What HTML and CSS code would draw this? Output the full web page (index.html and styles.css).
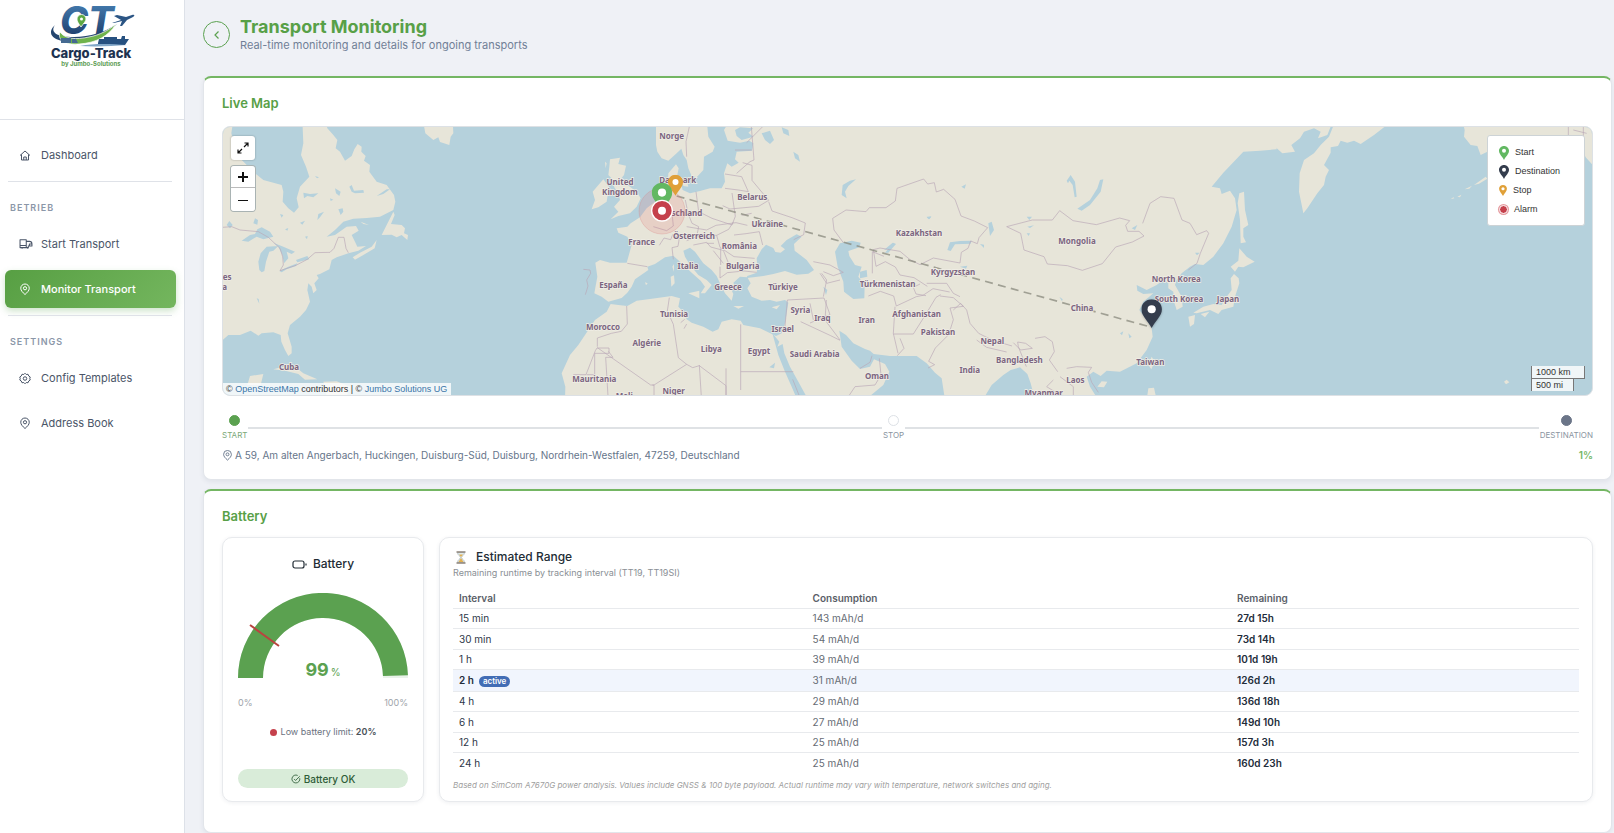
FILE: index.html
```html
<!DOCTYPE html>
<html lang="en">
<head>
<meta charset="utf-8">
<title>Transport Monitoring</title>
<link rel="stylesheet" href="styles.css">
</head>
<body>
<svg class="defs" aria-hidden="true">
  <symbol id="i-pin" viewBox="0 0 24 24"><path d="M12 22c5-4.500 8.500-8 8.500-12.500a8.500 8.500 0 0 0-17 0C3.500 14 7 17.500 12 22z"/><circle cx="12" cy="9.500" r="3.200"/></symbol>
  <symbol id="m-pin" viewBox="0 0 60 84"><path d="M30 0C13 0 0 13 0 29c0 20 18 32 30 55 12-23 30-35 30-55C60 13 47 0 30 0z"/><circle cx="30" cy="29" r="12" fill="#fff"/></symbol>
</svg>
<div class="app">
  <aside class="sidebar">
    <div class="logo">
      <svg viewBox="0 0 110 80" role="img" aria-label="Cargo-Track by Jumbo-Solutions">
        <defs>
          <linearGradient id="lg" x1="0" y1="0" x2="0" y2="1"><stop offset="0" stop-color="#4b87bb"/><stop offset="1" stop-color="#173360"/></linearGradient>
        </defs>
        <text x="20" y="34" class="logo-ct" fill="url(#lg)">C</text>
        <text x="48" y="34" class="logo-ct" fill="url(#lg)">T</text>
        <path d="M41 27c-3-4-4-6-4-8a4 4 0 0 1 9 0c0 2-2 4-5 8z" fill="#5da843" stroke="#fff" stroke-width=".8"/><circle cx="41.500" cy="19" r="1.500" fill="#fff"/>
        <path d="M15 25c-9 8-3 18 20 16 19-2 33-9 42-17-12 8-27 13-43 13-18 0-24-5-19-12z" fill="#25466f"/>
        <path d="M20 32c5 7 16 8 29 5 11-2 20-7 27-13-7 12-20 19-37 20-14 1-22-4-19-12z" fill="#6fb34c" stroke="#fff" stroke-width=".7"/>
        <path d="M72 23l9-3-7-4 3-1 9 2 6-2c3-1 3 1 1 2l-6 3-5 6-2 0 2-5-8 2z" fill="#2b5584"/>
        <path d="M58 43l1-4h5v-2h13v2h4l1-3h3v3h4l-4 6H58z" fill="#275180"/>
        <path d="M21 38h10v5H21zM32 39h4l2 4h-6z" fill="#456a91"/>
        <path d="M40 46c14-3 32-2 47-1-15 1-30 2-47 1z" fill="#82a7c8"/>
        <text x="51" y="58" text-anchor="middle" class="logo-name">Cargo-Track</text>
        <text x="51" y="66" text-anchor="middle" class="logo-by">by Jumbo-Solutions</text>
      </svg>
    </div>
    <nav class="nav">
      <a href="#" class="nav-item"><svg class="ico" viewBox="0 0 24 24"><path d="M2 12 12 3l10 9M5 10v11h14V10M9.500 21v-6h5v6"/></svg>Dashboard</a>
      <hr>
      <h2>BETRIEB</h2>
      <a href="#" class="nav-item"><svg class="ico wide" viewBox="0 0 27 24"><path d="M2 3h12v15H2zM14 6h6c3 0 5 2 5 5v4h-5v-4h5M14 18h4v-4M6 18v2M17 18v2M2 14h12"/></svg>Start Transport</a>
      <a href="#" class="nav-item active" aria-current="page"><svg class="ico"><use href="#i-pin"/></svg>Monitor Transport</a>
      <hr>
      <h2>SETTINGS</h2>
      <a href="#" class="nav-item"><svg class="ico" viewBox="0 0 24 24"><path d="M12 1.500l2.500 2.500 3.500-.500 1.500 3.500 3 2-1 3 1 3-3 2-1.500 3.500-3.500-.500-2.500 2.500-2.500-2.500-3.500.500L4.500 17l-3-2 1-3-1-3 3-2L6 3.500l3.500.500z"/><circle cx="12" cy="12" r="3.500"/></svg>Config Templates</a>
      <a href="#" class="nav-item"><svg class="ico"><use href="#i-pin"/></svg>Address Book</a>
    </nav>
  </aside>

  <main class="main">
    <header class="head">
      <button class="back" aria-label="Back"><svg viewBox="0 0 12 12"><path d="M7.500 2.500 4 6l3.500 3.500"/></svg></button>
      <div>
        <h1>Transport Monitoring</h1>
        <p>Real-time monitoring and details for ongoing transports</p>
      </div>
    </header>

    <section class="card">
      <h2>Live Map</h2>
      <div class="map">
        <svg class="map-canvas" viewBox="6 21 4113 804" preserveAspectRatio="xMidYMid slice" role="img" aria-label="World map">
          <g class="land">
            <path d="M0 0H40L34 40 45 80 60 115 105 160 130 180 185 195 190 215 188 245 205 265 222 278 236 262 230 235 240 200 268 170 258 140 243 105 250 70 247 0H315L322 25 340 45 352 60 347 85 360 95 375 122 395 108 403 88 413 72 425 80 424 95 437 108 432 122 450 135 448 155 470 185 500 195 522 225 526 245 520 270 480 290 440 294 400 296 370 305 345 330 320 350 345 345 380 320 408 318 416 332 395 345 405 365 412 380 438 378 415 392 385 400 350 412 335 420 328 448 300 462 290 465 296 475 283 490 290 510 280 520 275 500 265 490 262 510 270 545 258 570 240 590 210 615 203 640 215 680 215 700 205 708 195 690 184 665 182 645 160 637 125 640 115 647 92 632 60 645 25 645 8 660H0z"/>
            <path d="M398 412 420 398 455 380 470 360 464 385 430 405 405 419zM485 345 500 315 520 275 524 285 513 312 545 315 555 325 552 340 564 345 562 360 545 345 530 352 515 344z"/>
            <path d="M612 18 616 40 640 60 655 52 660 66 688 75 692 50 700 40 698 0H612zM160 748 190 740 235 748 250 760 292 778 255 779 235 762 195 752zM310 785 350 784 390 800 380 828H320zM82 795 90 768 130 762 122 795zM422 305 447 315 430 312z"/>
          </g>
          <g class="land" transform="translate(960 0)">
            <path d="M348 0V75L352 95 365 115 385 122 410 100 424 86 430 105 440 120 445 145 455 168 470 172 490 150 492 110 518 95 524 80 505 50 500 0z"/>
            <path d="M570 0 552 30 563 62 600 68 628 62 640 70 636 92 590 95 585 118 596 128 575 140 562 130 552 160 555 185 545 205 510 205 480 213 450 220 428 210 424 195 430 185 412 165 416 145 408 133 385 160 383 200 380 235 345 245 320 265 300 292 272 310 262 320 230 325 235 338 262 350 275 375 268 400 260 428 210 428 180 420 166 428 172 470 163 520 185 530 205 545 245 534 262 518 275 500 285 478 325 450 322 440 345 432 375 412 400 407 420 425 455 458 482 482 495 500 482 520 495 520 515 495 500 480 475 465 450 435 435 410 430 392 450 383 465 395 490 430 515 450 530 468 540 490 555 520 575 542 580 522 570 500 590 510 580 488 600 470 622 472 632 490 622 505 635 530 665 542 690 540 710 545 735 540 745 548 740 580 735 610 725 640 708 648 660 625 610 615 602 602 575 598 545 605 535 628 518 635 490 620 455 608 440 598 430 575 415 560 420 535 395 528 330 537 290 542 262 558 235 555 212 552 200 575 165 600 135 645 115 675 90 705 65 760 76 800 75 840H1010V0z"/>
            <path d="M210 118 240 113 235 132 258 137 252 165 240 180 270 200 290 215 302 235 290 260 270 280 235 288 212 298 235 275 222 260 240 240 235 220 222 200 225 185 205 165 208 140zM158 215 190 178 207 200 200 245 175 262 155 268 165 240zM195 125l5 5-3 15zM445 520 478 512 478 535zM392 470 402 466 404 490 394 500zM397 440 402 432 402 455zM425 178 440 180 445 200 430 198zM580 558H612L595 566zM695 562 720 555 710 568zM315 487l8 3-5 6z"/>
          </g>
          <g class="land" transform="translate(1920 0)">
            <path d="M30 0H1250V88L1200 92 1150 95 1090 158 1055 200 1080 205 1085 222 1110 212 1125 235 1130 270 1115 320 1090 370 1060 410 1030 435 1005 432 990 440 965 460 950 480 945 495 965 530 968 560 950 570 942 545 940 515 925 505 925 490 910 480 890 495 860 510 830 495 832 512 850 522 880 520 850 545 838 570 860 600 875 625 878 650 860 690 830 730 780 755 740 752 722 768 700 755 680 770 690 800 715 840H30z"/>
            <path d="M712 800 725 784 742 785 732 802zM865 735 875 710 884 725 874 748zM860 840 865 805 882 803 890 840zM985 590 1005 585 1002 612 990 620zM1000 578 1030 560 1060 552 1085 555 1100 530 1115 510 1112 475 1122 462 1136 475 1138 490 1125 530 1120 560 1085 570 1075 582 1050 570 1010 580zM1022 582 1048 575 1035 592zM1112 440 1135 422 1138 385 1160 410 1184 425 1150 442 1135 440 1125 455zM1138 220 1152 215 1155 270 1165 315 1150 325 1150 350 1158 367 1142 370 1140 300 1133 250z"/>
            <g transform="translate(1062 -150)">
              <path d="M60 265 78 243 130 240 185 232 205 250 243 245 232 225 258 205 270 185 300 175 320 185 312 205 340 195 358 150H0V300zM540 150 510 172 480 195 440 222 420 212 400 218 380 212 372 228 350 232 350 248 330 285 345 300 335 320 330 345 310 370 280 415 268 430 262 400 255 365 257 310 270 270 300 250 320 225 345 200 358 168 370 150zM745 150 752 180 750 200 770 225 790 228 800 255 820 245 870 240 1100 230 1115 262 1136 285 1140 150zM710 388l8-6 3 3zM730 380l12-6-4 8zM752 358l22-11-8 9zM780 345l35-25 5 6-25 15zM870 935l8-6 8 8-10 6z"/>
            </g>
          </g>
          <g class="water">
            <path d="M65 362 90 345 105 342 112 328 125 322 150 335 160 350 130 358 110 350 85 365zM118 450 115 425 122 400 140 380 175 378 160 392 148 395 138 425 133 453 125 457zM160 368 190 380 225 395 215 402 200 395 205 415 192 430 187 405 175 380zM178 453 205 440 232 430 228 438 200 448 185 457zM228 420 262 408 268 418 232 427zM250 218 270 222 295 220 280 232 262 228 252 235zM345 205 362 215 358 228 348 220zM388 200 395 195 402 212 430 210 432 218 405 220 395 215zM292 300 295 282 312 275 300 292zM355 268 368 265 370 275 362 285zM100 310 105 295 114 300 112 314zM470 228 500 208 510 208 490 222zM110 535l6 2 2 14zM20 315l8-12 10 12-8 10zM240 308l15-6-8 12zM180 282l10 3-5 8zM330 235l10 4-8 4zM255 350l8-2-2 10zM195 328l10-4-3 8zM285 168l12 4-6 3z"/>
            <g transform="translate(960 0)">
              <path d="M652 442 650 415 665 388 678 374 700 384 706 396 722 398 735 388 722 378 740 360 770 343 785 350 762 372 764 392 800 420 822 450 805 461 770 464 735 453 700 462 670 468 640 472 620 474 622 468 650 458zM885 395 900 370 935 362 962 368 958 382 925 393 928 408 945 435 965 440 955 470 974 495 973 535 940 537 912 515 910 485 893 440zM697 640 718 665 712 680 728 672 733 700 750 740 775 785 805 840H772L755 800 735 755 715 705zM898 632 918 645 940 670 975 687 990 692 1001 702 1050 708 1130 708 1160 730 1185 758 1205 775 1215 840H975L1000 820 1030 795 1048 755 1035 732 1002 718 990 740 960 747 935 722 905 680z"/>
              <path d="M585 30 600 22 640 25 625 38 640 50 605 60 590 48zM665 40 690 32 702 60 690 72 675 60zM725 22 745 30 748 48 730 40zM760 95 775 105 780 125 765 115zM908 195 930 182 948 178 925 198 915 215 920 235 905 225zM1035 398 1060 368 1068 372 1045 398zM850 500 862 510 858 525zM1160 290l14 0-6 8zM688 742 705 728 702 745z"/>
            </g>
            <g transform="translate(1920 0)">
              <path d="M262 390 270 367 300 363 335 362 332 371 285 373 272 393zM652 266 690 240 712 205 720 180 730 178 722 215 690 255 665 272zM620 182 632 165 645 185 650 230 644 232 638 195 628 182 624 190zM385 310 395 305 402 330 390 348zM360 372l12 2 0 10zM300 440 322 437 318 446zM0 455 20 450 22 470 0 475zM500 290l16 0-8 10zM502 320l20-4-12 8zM500 340l10 0-4 8zM815 325 832 315 825 330zM598 530l10 8-2 6zM780 640l10-6-4 12zM805 640 815 650 808 655zM365 845 395 795 430 765 452 750 480 742 502 762 512 790 525 840zM304 200 318 193 314 206zM200 292l14-3-8 9zM1005 398l14 0-8 8zM72 390 98 368 104 374 85 388z"/>
            </g>
          </g>
          <g class="border">
            <path d="M8 322 35 320 60 330 115 335 145 352 180 385 188 410 190 435 180 452 228 436 262 418 285 398 330 397 342 385 355 352 372 352 378 385 385 398"/>
            <path d="M1090 448l20 2 2 10-12 20 4 18-8 26"/>
            <path d="M1060 764h38l28-72 5-8h36v16h-43v64h-24M1132 680v-26l42-14 30-6 18-22-2-54M1132 683l160 112h10l98-62-25-20-15-100-18-40 6-40M1302 828v-33h-5M1400 733l18 10 20-6 80 60v30M1438 735l6 95M1164 828l-7-116h22l-14-18M1562 613V810M1562 755h158M1382 608l12-10M1518 745v85M1738 828l-20-50M1400 612l-8 14"/>
            <path d="M1222 430l60 10M1318 376l14-22 20 5 6-15 20 10-4 25-18 4 4 35M1300 320l40 12 20-14-4-40M1396 240l8 40 12 30 20 10-6 30-30 12M1428 215l8 60 40 20 60 20 10-26-10-70M1436 275l-30 8M1400 320l60 10 28-14 60-8 34 8M1430 350l60-4 36-18 14-22M1490 346l10 36 42 28 62 5M1542 345l36-4 40-6 10 40M1420 375l40-8 12 14 38 10 20 50M1460 370l22 0M1480 392l30 38M1500 440l0 34 22-16 50-5 38 4M1502 385l0 50M1515 205l40 5 30 5-20-45-50-8M1550 160l40-35 12-5-8-100M1568 128l28 8 0 45 50 60-30 18-86 8-22-10M1646 245l10 28 60 20 40 16-5 35-30 15M1400 110l-2-45 10-45M1545 90h50M1580 68l50-50M1595 280l-30 6M1780 425l50 10 40 22-30 10-30-12M1800 460l20 30 40-10M1702 540l110-6 18 50-60 25M1702 540l-8 90M1742 605l90 42 28 14M1780 600l-10-50M1810 530l10-50-15-20M1860 660l-45-60 4-60"/>
            <path d="M1842 330l-4-35 40-25 60 5 10-12 50 0 28-20 5-38 80-28 12 15 20-4 6 28 22-8 34 30 18 50 40 15 40 20-26 30-5 18-20-8-8 22-20 12-4 32-80-15-40 20-30-15-30-25-60-10-20 5 8 50 28-14 30 16 14 24 42 8 40 26M1842 330l28 38M1957 460V395l35 14M1945 528l36-14 40 14 8 30 60-28 20-4 30-20 50 10M2025 560l-5 80 14 60M2020 642h60l38-60 30-50 14-8M2040 655l12 30-20 22M2120 490l60 0 20 30 20 10M2100 492l-20 10 8 20 30 5M2200 570l22-20 18 20 10 40 26 30 40 20 60 18M2160 528l40 5 30 26-40 5 10 35-14 45-40 40-20 40 18 10-20 10"/>
            <path d="M2360 320l42 20 10 50 60 20 10 22 60 5 45 14 60-20 40-50 50-15 35-18-15-14-34 0-6-18 12-14-30-8-70 20-70-12-40-30-22 28-60 0zM2768 310l22-60 32-20 40 5 24 65 24 10 20 34 30-12 6 8-25 60-10 30-26 20M2380 668l22 22 35-5-20-15-24-4 2 14 24 60M2445 655l30-5 22 15 6 30-15 25 25 35M2540 745l30-5 45 2-10 15 10 30 20 30M2500 780l-20 20 40 25M2520 770l40 30 0 28M1920 745l30-18 6-20M1885 830l20-30 60-5 18-30-5-50M2270 660l30 22 60 14"/>
            <path d="M4045 18v30M4090 18v30M4060 30l40 10"/>
          </g>
          <path class="route" d="M1370 228 2795 622"/>
          <g class="names">
            <text x="16" y="481">tes</text><text x="14" y="511">a</text>
            <text x="207" y="749">Cuba</text>
            <text x="1355" y="56">Norge</text><text x="1373" y="190">Danmark</text>
            <text x="1200" y="196">United</text><text x="1200" y="226">Kingdom</text>
            <text x="1372" y="287">Deutschland</text><text x="1597" y="240">Belarus</text>
            <text x="1642" y="321">Ukraine</text><text x="1422" y="357">Österreich</text>
            <text x="1265" y="376">France</text><text x="1558" y="387">România</text>
            <text x="1404" y="447">Italia</text><text x="1568" y="448">Bulgaria</text>
            <text x="1180" y="503">España</text><text x="1524" y="509">Greece</text>
            <text x="1689" y="509">Türkiye</text><text x="1362" y="590">Tunisia</text>
            <text x="1149" y="631">Morocco</text><text x="1280" y="678">Algérie</text>
            <text x="1474" y="695">Libya</text><text x="1617" y="703">Egypt</text>
            <text x="1741" y="578">Syria</text><text x="1807" y="602">Iraq</text>
            <text x="1688" y="637">Israel</text><text x="1784" y="712">Saudi Arabia</text>
            <text x="1940" y="609">Iran</text><text x="1971" y="777">Oman</text>
            <text x="1123" y="786">Mauritania</text><text x="1361" y="821">Niger</text><text x="1213" y="838">Mali</text>
            <text x="2097" y="348">Kazakhstan</text><text x="2571" y="372">Mongolia</text>
            <text x="2199" y="466">Kyrgyzstan</text><text x="2003" y="502">Türkmenistan</text>
            <text x="2090" y="592">Afghanistan</text><text x="2154" y="644">Pakistan</text>
            <text x="2317" y="672">Nepal</text><text x="2398" y="728">Bangladesh</text>
            <text x="2249" y="758">India</text><text x="2586" y="573">China</text>
            <text x="2566" y="790">Laos</text><text x="2471" y="829">Myanmar</text>
            <text x="2869" y="486">North Korea</text><text x="2877" y="547">South Korea</text>
            <text x="3024" y="547">Japan</text><text x="2791" y="735">Taiwan</text>
          </g>
          <circle cx="1326" cy="273" r="69" fill="#e86a6a" fill-opacity=".17" stroke="#d87878" stroke-opacity=".4" stroke-width="2"/>
          <use href="#m-pin" x="1344" y="164" width="45" height="64" fill="#e0a038"/>
          <use href="#m-pin" x="1295" y="188" width="62" height="86" fill="#62b862"/>
          <circle cx="1326" cy="272" r="31" fill="#c5414c" stroke="#fff" stroke-width="4"/>
          <circle cx="1326" cy="272" r="12" fill="#fff"/>
          <use href="#m-pin" class="goal" x="2764" y="538" width="62" height="86" fill="#343d4d"/>
        </svg>
        <div class="controls">
          <button class="ctl" aria-label="Fullscreen"><svg viewBox="0 0 12 12"><path d="M7 5l4-4M7.500 1H11v3.500M5 7l-4 4M1 7.500V11h3.500"/></svg></button>
          <div class="zoom">
            <button aria-label="Zoom in"><svg viewBox="0 0 12 12"><path d="M1 6h10M6 1v10"/></svg></button>
            <button aria-label="Zoom out"><svg class="thin" viewBox="0 0 12 12"><path d="M1 6.500h10"/></svg></button>
          </div>
        </div>
        <ul class="legend">
          <li><svg class="lp"><use href="#m-pin" fill="#62b862"/></svg>Start</li>
          <li><svg class="lp"><use href="#m-pin" fill="#343d4d"/></svg>Destination</li>
          <li><svg class="lp small"><use href="#m-pin" fill="#e0a038"/></svg>Stop</li>
          <li><span class="alarm"></span>Alarm</li>
        </ul>
        <div class="attribution">© <a href="#">OpenStreetMap</a> contributors | © <a href="#">Jumbo Solutions UG</a></div>
        <div class="scale"><div>1000 km</div><div>500 mi</div></div>
      </div>

      <div class="steps">
        <div class="step start"><i></i>START</div>
        <div class="line"></div>
        <div class="step"><i></i>STOP</div>
        <div class="line"></div>
        <div class="step dest"><i></i>DESTINATION</div>
      </div>
      <div class="place">
        <span><svg class="pin"><use href="#i-pin"/></svg>A 59, Am alten Angerbach, Huckingen, Duisburg-Süd, Duisburg, Nordrhein-Westfalen, 47259, Deutschland</span>
        <b>1%</b>
      </div>
    </section>

    <section class="card battery">
      <h2>Battery</h2>
      <div class="panels">
        <div class="panel gauge-panel">
          <h3><svg class="batt" viewBox="0 0 15 9"><rect x="1" y="1" width="11" height="7" rx="2"/><path d="M14 3.500v2"/></svg>Battery</h3>
          <div class="gauge">
            <svg viewBox="0 0 170 86" role="img" aria-label="Battery level 99 percent">
              <path d="M0 85a85 85 0 0 1 170 0h-25a60 60 0 0 0-120 0z" fill="#e9f2e9"/>
              <path d="M0 85A85 85 0 0 1 169.960 82.300L144.970 83.100A60 60 0 0 0 25 85z" fill="#5ba150"/>
              <path d="M12 32 41 53" stroke="#b9443f" stroke-width="2"/>
            </svg>
            <p>99<small>%</small></p>
          </div>
          <div class="ends"><span>0%</span><span>100%</span></div>
          <p class="limit"><i></i>Low battery limit: <b>20%</b></p>
          <p class="ok"><svg viewBox="0 0 24 24"><path d="M21 10a9.500 9.500 0 1 1-5-6.500M7.500 12l3.500 3.500L21 5.500"/></svg>Battery OK</p>
        </div>
        <div class="panel range">
          <h3><svg class="glass" viewBox="0 0 10 13"><path d="M1.500 1.500h7c0 3-3 3.500-3 5s3 2 3 5h-7c0-3 3-3.500 3-5s-3-2-3-5z" fill="#dfe9ec" stroke="#a9b6b8" stroke-width=".7"/><path d="M3 3.500h4L5 6zM5 7l2.500 4h-5z" fill="#e2b04e"/><path d="M.5 1h9M.5 12h9" stroke="#8d8378" stroke-width="1.500"/></svg>Estimated Range</h3>
          <p class="sub">Remaining runtime by tracking interval (TT19, TT19SI)</p>
          <table>
            <thead><tr><th>Interval</th><th>Consumption</th><th>Remaining</th></tr></thead>
            <tbody>
              <tr><td>15 min</td><td>143 mAh/d</td><td>27d 15h</td></tr>
              <tr><td>30 min</td><td>54 mAh/d</td><td>73d 14h</td></tr>
              <tr><td>1 h</td><td>39 mAh/d</td><td>101d 19h</td></tr>
              <tr class="on"><td>2 h<span class="badge">active</span></td><td>31 mAh/d</td><td>126d 2h</td></tr>
              <tr><td>4 h</td><td>29 mAh/d</td><td>136d 18h</td></tr>
              <tr><td>6 h</td><td>27 mAh/d</td><td>149d 10h</td></tr>
              <tr><td>12 h</td><td>25 mAh/d</td><td>157d 3h</td></tr>
              <tr><td>24 h</td><td>25 mAh/d</td><td>160d 23h</td></tr>
            </tbody>
          </table>
          <p class="note">Based on SimCom A7670G power analysis. Values include GNSS &amp; 100 byte payload. Actual runtime may vary with temperature, network switches and aging.</p>
        </div>
      </div>
    </section>
  </main>
</div>
</body>
</html>
```
FILE: styles.css
```css
* { box-sizing: border-box; }
body { margin: 0; background: #eff1f6; color: #2d3748; font-family: Inter, "Liberation Sans", sans-serif; font-size: 10px; line-height: 14px; }
h1, h2, h3, p, ul { margin: 0; padding: 0; font-size: inherit; }
ul { list-style: none; }
a { text-decoration: none; color: inherit; }
button { padding: 0; font: inherit; cursor: pointer; }
svg { display: block; }
.defs { position: absolute; width: 0; height: 0; }
.app { display: grid; grid-template-columns: 185px 1fr; min-height: 100vh; }

/* sidebar */
.sidebar { background: #fff; border-right: 1px solid #dde1e8; }
.logo { height: 120px; padding-left: 40px; border-bottom: 1px solid #dfe2e8; }
.logo svg { width: 110px; height: 80px; overflow: visible; }
.logo-ct { font: italic 800 38px Inter, sans-serif; }
.logo-name { font: 800 13px Inter, sans-serif; fill: #1d3250; }
.logo-by { font: 700 6px Inter, sans-serif; fill: #5b9b52; }
.nav { padding: 16px 8px 0 5px; }
.nav-item { display: flex; align-items: center; gap: 10px; height: 38px; margin-bottom: 7px; padding-left: 14px; border-radius: 6px; color: #4a5568; font-size: 11px; font-weight: 400; }
.nav-item.active { background: linear-gradient(135deg, #579f43, #74b65e); color: #fff; font-weight: 500; box-shadow: 0 3px 7px rgba(91, 161, 80, .3); }
.ico { width: 12px; height: 13px; fill: none; stroke: currentColor; stroke-width: 2; stroke-linejoin: round; }
.ico.wide { width: 14px; margin-right: -2px; }
.nav hr { height: 1px; margin: 1px 4px 19px 3px; border: 0; background: #dfe2e8; }
.nav h2 { height: 14px; margin: 0 0 10px 5px; color: #8b97a8; font-size: 9px; font-weight: 600; letter-spacing: 1px; }

/* page heading */
.main { min-width: 0; padding: 16px 2px 0 18px; }
.head { display: flex; align-items: flex-start; gap: 10px; height: 60px; }
.back { display: grid; place-items: center; width: 27px; height: 27px; margin-top: 5px; border: 1px solid #5ba150; border-radius: 50%; background: none; }
.back svg { width: 12px; height: 12px; fill: none; stroke: #5ba150; stroke-width: 1.2; }
h1 { color: #58a047; font-size: 18px; font-weight: 700; line-height: 22px; }
.head p { color: #718096; font-size: 11px; line-height: 15px; }

/* cards */
.card { padding: 16px 18px 0; border: 1px solid #e2e5ea; border-top: 2px solid #74b663; border-radius: 8px; background: #fff; box-shadow: 0 2px 5px rgba(30, 40, 70, .07); }
.card > h2 { height: 30px; color: #58a047; font-size: 13px; font-weight: 600; line-height: 18px; }

/* map */
.map { position: relative; height: 270px; margin-top: 2px; overflow: hidden; border: 1px solid #dde1e5; border-radius: 8px; background: #b5d1dc; }
.map-canvas { width: 100%; height: 100%; }
.land { fill: #e7e5d9; }
.water { fill: #b5d1dc; }
.border { fill: none; stroke: #b9a7b6; stroke-width: 2; }
.route { fill: none; stroke: #88887c; stroke-opacity: .75; stroke-width: 5; stroke-dasharray: 24 16; }
.names text { font: 700 24px "Noto Sans", sans-serif; fill: #7b6580; stroke: #f0eee6; stroke-width: 4px; paint-order: stroke; text-anchor: middle; }
.goal { filter: drop-shadow(0 2px 3px rgba(0, 0, 0, .25)); }
.controls { position: absolute; top: 9px; left: 8px; }
.controls button { display: grid; place-items: center; width: 24px; height: 24px; border: 0; background: #fff; }
.controls .ctl { margin-bottom: 6px; border-radius: 3px; box-shadow: 0 0 2px rgba(0, 0, 0, .35); }
.controls svg { width: 12px; height: 12px; fill: none; stroke: #111; stroke-width: 1.2; }
.zoom { border-radius: 3px; overflow: hidden; box-shadow: 0 0 0 1px #a9b3b3; }
.controls .zoom button { height: 22px; }
.controls .zoom button:first-child { border-bottom: 1px solid #bbb; }
.controls .zoom button:last-child { height: 23px; }
.controls .zoom svg { stroke-width: 2; }
.controls .zoom .thin { stroke-width: 1; }
.legend { position: absolute; top: 8px; right: 7px; width: 98px; height: 91px; padding: 7px 11px; border: 1px solid #cdd3d6; border-radius: 3px; background: #fff; color: #333; font: 9px/19px "Liberation Sans", Arial, sans-serif; }
.legend li { display: flex; align-items: center; gap: 6px; height: 19px; }
.lp { width: 10px; height: 14px; }
.lp.small { width: 8px; height: 11px; }
.alarm { width: 9px; height: 9px; border: 1px solid #fff; border-radius: 50%; background: #c5414c; box-shadow: 0 0 0 1px #e59a9f; }
.attribution { position: absolute; left: 0; bottom: 0; padding: 0 4px 0 3px; background: rgba(255, 255, 255, .8); color: #333; font: 9px/12px "Liberation Sans", Arial, sans-serif; }
.attribution a { color: #3a75a8; }
.scale { position: absolute; right: 7px; bottom: 4px; width: 54px; color: #333; font: 9px/12px "Liberation Sans", Arial, sans-serif; }
.scale div { padding-left: 4px; border: 1px solid #777; border-top: 0; background: rgba(255, 255, 255, .8); }
.scale div + div { width: 43px; border-bottom: 0; }

/* progress */
.steps { display: flex; height: 26px; margin-top: 19px; }
.step { display: flex; flex-direction: column; align-items: center; gap: 3px; color: #8a94a0; font-size: 8px; line-height: 12px; text-transform: uppercase; }
.step i { flex: none; width: 11px; height: 11px; border: 1px solid #dde1e6; border-radius: 50%; background: #fff; }
.start { color: #7ba877; }
.start i { border-color: #5ba150; background: #5ba150; }
.dest i { border-color: #6b7588; background: #6b7588; }
.line { flex: 1; height: 2px; margin: 12px 1px 0; background: #dfe2e5; }
.place { display: flex; align-items: center; justify-content: space-between; height: 38px; padding-bottom: 10px; color: #66758a; }
.place span { display: flex; align-items: center; gap: 2px; }
.place b { color: #74b663; font-weight: 600; }
.pin { width: 11px; height: 11px; fill: none; stroke: currentColor; stroke-width: 2; }

/* battery */
.battery { margin-top: 9px; padding-bottom: 30px; }
.panels { display: grid; grid-template-columns: 202px 1fr; gap: 15px; }
.panel { height: 265px; border: 1px solid #e8eaed; border-radius: 10px; background: #fff; box-shadow: 0 1px 4px rgba(30, 40, 70, .07); }
.panel h3 { display: flex; align-items: center; color: #222c35; font-size: 12px; font-weight: 500; line-height: 16px; }
.gauge-panel { padding: 18px 15px 0; }
.gauge-panel h3 { justify-content: center; gap: 6px; }
.batt { width: 15px; height: 9px; fill: none; stroke: #222c35; stroke-width: 1.2; }
.gauge { position: relative; margin-top: 21px; }
.gauge svg { width: 100%; }
.gauge p { position: absolute; left: 0; right: 0; bottom: 0; text-align: center; color: #5ba150; font-size: 18px; font-weight: 700; line-height: 14px; }
.gauge small { margin-left: 2px; font-size: 10px; font-weight: 400; }
.ends { display: flex; justify-content: space-between; margin-top: 17px; color: #a0a5ab; font-size: 9px; }
.limit { display: flex; align-items: center; justify-content: center; margin-top: 15px; color: #6b7280; font-size: 9px; white-space: pre; }
.limit i { width: 7px; height: 7px; margin-right: 4px; border-radius: 50%; background: #c5414c; }
.limit b { color: #4a5058; font-weight: 600; }
.ok { display: flex; align-items: center; justify-content: center; gap: 3px; height: 19px; margin-top: 30px; border-radius: 10px; background: #d9ecd9; color: #2f5c38; font-weight: 500; }
.ok svg { width: 10px; height: 10px; fill: none; stroke: currentColor; stroke-width: 2; }
.range { padding: 11px 13px 0; }
.range h3 { gap: 10px; padding-left: 3px; }
.glass { width: 10px; height: 13px; }
.sub { color: #8a8f95; font-size: 9px; line-height: 15px; }
table { width: 100%; margin-top: 8px; border-collapse: collapse; table-layout: fixed; }
th { height: 20px; padding: 0 6px; text-align: left; color: #5a6068; font-weight: 600; }
th:nth-child(1) { width: 31.4%; }
th:nth-child(2) { width: 37.7%; }
td { height: 20px; padding: 0 6px; border-top: 1px solid #e8eaed; line-height: 14px; }
tr:nth-child(even) td { height: 21px; }
tr.on td { height: 22px; background: #f1f5fd; }
td:nth-child(2) { color: #666c74; }
td:nth-child(3), .on td:first-child { color: #222c3a; font-weight: 600; }
.badge { display: inline-block; margin-left: 5px; padding: 0 4px; border-radius: 6px; background: #426db5; color: #fff; font-size: 8px; line-height: 11px; }
.note { margin-top: 5px; color: #a0a0a0; font-size: 8px; font-style: italic; }
```
